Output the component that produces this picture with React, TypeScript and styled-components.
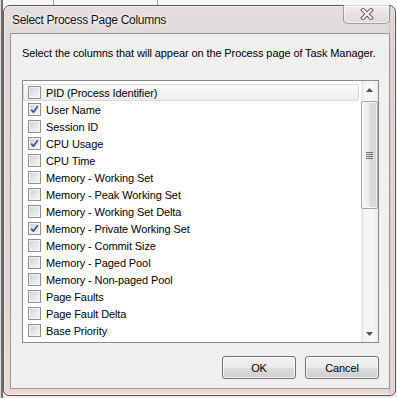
import React from 'react'
import styled, { createGlobalStyle } from 'styled-components'

const GlobalStyle = createGlobalStyle`
  html, body {
    margin: 0;
    padding: 0;
    width: 397px;
    height: 398px;
    overflow: hidden;
  }
  body {
    font-family: 'Segoe UI', 'Liberation Sans', Arial, sans-serif;
    font-size: 11px;
    letter-spacing: -0.1px;
    color: #000;
  }
`

// task manager peeking out behind the dialog
const Desktop = styled.div`
  width: 397px;
  height: 398px;
  box-sizing: border-box;
  padding: 5px 1px 2px 3px;
  background:
    linear-gradient(to right, transparent 53px, #a9a9a9 53px, #a9a9a9 54px, transparent 54px, transparent 157px, #a9a9a9 157px, #a9a9a9 158px, transparent 158px) top / 100% 5px no-repeat,
    linear-gradient(#f7f7f7, #ececec);
  box-shadow: inset 1px 0 0 #dedede, inset 3px 0 0 #6f6f6f;
`

const Window = styled.div`
  width: 393px;
  height: 391px;
  box-sizing: border-box;
  border: 1px solid #5b5656;
  border-radius: 7px 7px 6px 6px;
  padding: 0 5px 6px 6px;
  display: flex;
  flex-direction: column;
  background:
    linear-gradient(to right, rgba(255,255,255,0) 0, rgba(255,255,255,0) 384px, rgba(190,150,150,0.35) 386px, rgba(255,255,255,0.2) 388px, rgba(180,140,140,0.35) 390px),
    linear-gradient(180deg, #e3dfdf 0%, #e0d9d8 8%, #e3d5d2 50%, #ead9d5 100%);
  box-shadow: inset 0 0 0 1px rgba(255, 255, 255, 0.6);
`

const TitleBar = styled.div`
  height: 27px;
  flex: none;
  display: flex;
  align-items: flex-start;
  justify-content: space-between;
`

const Title = styled.div`
  padding: 5px 0 0 2px;
  font-size: 12px;
  line-height: 18px;
  letter-spacing: -0.3px;
  color: #111;
  text-shadow: 0 0 6px #fff, 0 0 3px #fff;
`

const CloseButton = styled.button`
  width: 47px;
  height: 19px;
  margin-top: -1px;
  padding: 0;
  border: 1px solid rgba(70, 60, 60, 0.45);
  border-top: none;
  border-radius: 0 0 5px 5px;
  background: linear-gradient(rgba(255,255,255,0.55), rgba(255,255,255,0.15) 50%, rgba(230,220,220,0.35));
  box-shadow: inset 0 0 0 1px rgba(255, 255, 255, 0.5);
  display: flex;
  align-items: center;
  justify-content: center;
`

const Client = styled.div`
  flex: 1;
  box-sizing: border-box;
  border: 1px solid #9a9696;
  background: #f0f0f0;
  padding: 12px 10px 0 11px;
  display: flex;
  flex-direction: column;
`

const Prompt = styled.div`
  line-height: 15px;
  white-space: nowrap;
`

const ListBox = styled.div`
  margin-top: 19px;
  width: 357px;
  height: 263px;
  box-sizing: border-box;
  border: 1px solid #828790;
  background: #fff;
  display: flex;
`

const Rows = styled.div`
  flex: 1;
  padding: 3px 2px 0 0;
`

const Row = styled.div<{ $hot?: boolean }>`
  height: 17px;
  box-sizing: border-box;
  display: flex;
  align-items: center;
  gap: 5px;
  padding-left: 4px;
  line-height: 18px;
  white-space: nowrap;
  border: 1px solid ${p => (p.$hot ? '#d9d9d9' : 'transparent')};
  border-radius: 2px;
  background: ${p => (p.$hot ? 'linear-gradient(#fcfcfc, #ececec)' : 'transparent')};
`

const Check = styled.span`
  width: 13px;
  height: 13px;
  flex: none;
  box-sizing: border-box;
  border: 1px solid #8f8f8f;
  background: linear-gradient(135deg, #cfd1d3 0%, #e6e7e8 55%, #f8f8f8 100%);
  box-shadow: inset 0 0 0 1px #f4f4f4;
  display: flex;
  align-items: center;
  justify-content: center;
`

const ScrollBar = styled.div`
  width: 17px;
  flex: none;
  display: flex;
  flex-direction: column;
  background: linear-gradient(to right, #e6e6e6, #f6f6f6 25%, #f6f6f6 75%, #ebebeb);
`

const Arrow = styled.div`
  height: 17px;
  flex: none;
  display: flex;
  align-items: center;
  justify-content: center;
`

const Track = styled.div`
  flex: 1;
  padding-top: 3px;
`

const Thumb = styled.div`
  height: 108px;
  box-sizing: border-box;
  border: 1px solid #a4a4a4;
  border-radius: 2px;
  background: linear-gradient(to right, #f6f6f6, #ececec 45%, #dedede 55%, #d6d6d6);
  box-shadow: inset 0 0 0 1px rgba(255, 255, 255, 0.7);
  display: flex;
  align-items: center;
  justify-content: center;
`

const Footer = styled.div`
  margin-top: 13px;
  width: 357px;
  display: flex;
  justify-content: flex-end;
  gap: 9px;
`

const Button = styled.button`
  width: 74px;
  height: 23px;
  padding: 0;
  border: 1px solid #707070;
  border-radius: 3px;
  font-family: inherit;
  font-size: 11px;
  letter-spacing: inherit;
  color: #000;
  background: linear-gradient(#f2f2f2 0%, #ebebeb 50%, #dddddd 51%, #cfcfcf 100%);
  box-shadow: inset 0 0 0 1px rgba(255, 255, 255, 0.75);
`

const columns: [string, boolean][] = [
  ['PID (Process Identifier)', false],
  ['User Name', true],
  ['Session ID', false],
  ['CPU Usage', true],
  ['CPU Time', false],
  ['Memory - Working Set', false],
  ['Memory - Peak Working Set', false],
  ['Memory - Working Set Delta', false],
  ['Memory - Private Working Set', true],
  ['Memory - Commit Size', false],
  ['Memory - Paged Pool', false],
  ['Memory - Non-paged Pool', false],
  ['Page Faults', false],
  ['Page Fault Delta', false],
  ['Base Priority', false],
]

const CheckMark = () => (
  <svg width="9" height="9" viewBox="0 0 9 9">
    <path d="M1.2 4.6 L3.4 7.2 L7.8 1.2" fill="none" stroke="#3d5486" strokeWidth="1.7" strokeLinejoin="round" />
  </svg>
)

const CloseGlyph = () => (
  <svg width="14" height="12" viewBox="0 0 14 12">
    <path d="M3 2 L11 10 M11 2 L3 10" stroke="#5a5a5a" strokeWidth="4" strokeLinecap="square" />
    <path d="M3 2 L11 10 M11 2 L3 10" stroke="#fff" strokeWidth="2" strokeLinecap="square" />
  </svg>
)

const Tri = ({ up }: { up?: boolean }) => (
  <svg width="7" height="4" viewBox="0 0 7 4">
    <path d={up ? 'M0 4 L3.5 0 L7 4 Z' : 'M0 0 L3.5 4 L7 0 Z'} fill="#505050" />
  </svg>
)

const Grip = () => (
  <svg width="7" height="7" viewBox="0 0 7 7">
    {[0.5, 2.5, 4.5, 6.5].map(y => (
      <line key={y} x1="0" x2="7" y1={y} y2={y} stroke="#6e6e6e" strokeWidth="1" />
    ))}
  </svg>
)

export default function App() {
  return (
    <Desktop>
      <GlobalStyle />
      <Window>
        <TitleBar>
          <Title>Select Process Page Columns</Title>
          <CloseButton aria-label="Close">
            <CloseGlyph />
          </CloseButton>
        </TitleBar>
        <Client>
          <Prompt>Select the columns that will appear on the Process page of Task Manager.</Prompt>
          <ListBox>
            <Rows>
              {columns.map(([label, checked], i) => (
                <Row key={label} $hot={i === 0}>
                  <Check>{checked && <CheckMark />}</Check>
                  {label}
                </Row>
              ))}
            </Rows>
            <ScrollBar>
              <Arrow>
                <Tri up />
              </Arrow>
              <Track>
                <Thumb>
                  <Grip />
                </Thumb>
              </Track>
              <Arrow>
                <Tri />
              </Arrow>
            </ScrollBar>
          </ListBox>
          <Footer>
            <Button>OK</Button>
            <Button>Cancel</Button>
          </Footer>
        </Client>
      </Window>
    </Desktop>
  )
}
